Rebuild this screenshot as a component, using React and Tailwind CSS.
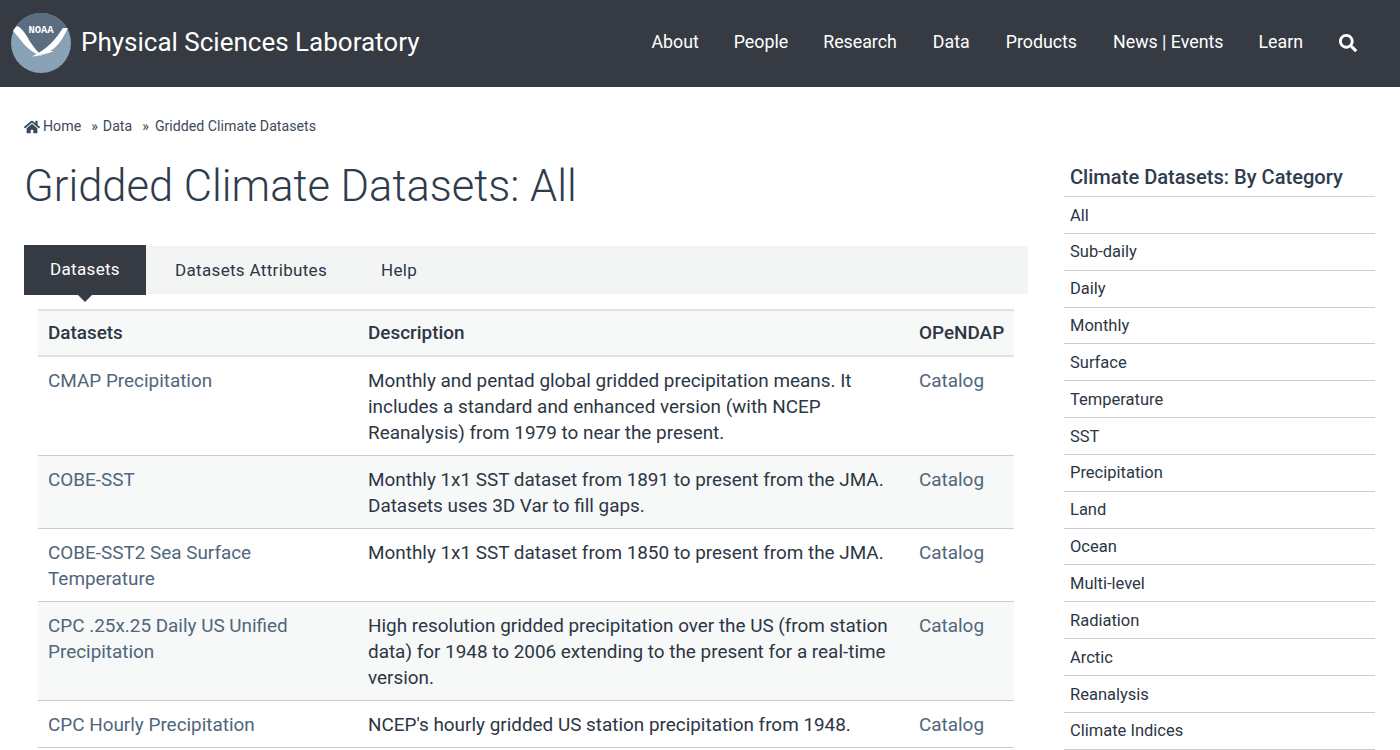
import { FaHome, FaSearch } from 'react-icons/fa'

const navItems = [
  { label: 'About', className: 'ml-0' },
  { label: 'People', className: 'ml-[35px]' },
  { label: 'Research', className: 'ml-[35px]' },
  { label: 'Data', className: 'ml-[36px]' },
  { label: 'Products', className: 'ml-[36px]' },
  { label: 'News | Events', className: 'ml-[36px]' },
  { label: 'Learn', className: 'ml-[35px]' },
]

const categories = [
  'All', 'Sub-daily', 'Daily', 'Monthly', 'Surface', 'Temperature', 'SST', 'Precipitation',
  'Land', 'Ocean', 'Multi-level', 'Radiation', 'Arctic', 'Reanalysis', 'Climate Indices',
]

const datasets = [
  {
    name: 'CMAP Precipitation',
    desc: 'Monthly and pentad global gridded precipitation means. It includes a standard and enhanced version (with NCEP Reanalysis) from 1979 to near the present.',
    rowClass: 'h-[99px] bg-white',
  },
  {
    name: 'COBE-SST',
    desc: 'Monthly 1x1 SST dataset from 1891 to present from the JMA. Datasets uses 3D Var to fill gaps.',
    rowClass: 'h-[73px] bg-[#f7f8f8]',
  },
  {
    name: 'COBE-SST2 Sea Surface Temperature',
    desc: 'Monthly 1x1 SST dataset from 1850 to present from the JMA.',
    rowClass: 'h-[73px] bg-white',
  },
  {
    name: 'CPC .25x.25 Daily US Unified Precipitation',
    desc: 'High resolution gridded precipitation over the US (from station data) for 1948 to 2006 extending to the present for a real-time version.',
    rowClass: 'h-[99px] bg-[#f7f8f8]',
  },
  {
    name: 'CPC Hourly Precipitation',
    desc: "NCEP's hourly gridded US station precipitation from 1948.",
    rowClass: 'h-[47px] bg-white',
  },
]

function NoaaLogo() {
  return (
    <svg width="60" height="60" viewBox="0 0 60 60" className="shrink-0">
      <circle cx="30" cy="30" r="30" fill="#8aa2b6" />
      <path d="M4 15 A30 30 0 0 1 56 15 L30 42 Z" fill="#5a6e80" />
      <path d="M6 13 C12 15 16 24 20 30 C23 35 27 39 31 43 C24 41 17 36 12 30 C8 25 5 21 2 18 C3 16 4.5 14 6 13 Z" fill="#ffffff" />
      <path d="M52 15 L57 15 C53 23 48 33 39 38 L43 38 C38 40 28 43 21 43.5 L29 39 C39 33 46 24 52 15 Z" fill="#ffffff" />
      <text x="30" y="20" textAnchor="middle" fill="#ffffff" fontSize="10.5" fontWeight="700" fontFamily="'Liberation Mono', monospace">NOAA</text>
    </svg>
  )
}

export default function App() {
  return (
    <div className="h-[750px] overflow-hidden bg-white text-[#2c3644] font-['Roboto',sans-serif]">
      <header className="h-[87px] bg-[#363a43] border-b-2 border-[#2f3c4d] flex items-center pl-[11px] pr-[43px] text-white">
        <NoaaLogo />
        <span className="ml-[10px] pb-[2px] text-[26px] leading-none">Physical Sciences Laboratory</span>
        <nav className="ml-auto flex items-center text-[17.8px]">
          {navItems.map((item) => (
            <a key={item.label} className={item.className}>{item.label}</a>
          ))}
          <FaSearch className="ml-[36px] text-[18px]" />
        </nav>
      </header>

      <div className="flex pl-[24px]">
        <main className="w-[1004px] shrink-0">
          <div className="mt-[31px] flex items-center h-[18px] text-[14.2px] text-[#3d4a5a]">
            <FaHome className="text-[16px] mr-[3px] text-[#36475a]" />
            <span>Home</span>
            <span className="ml-[10px] mr-[5px]">»</span>
            <span>Data</span>
            <span className="ml-[10px] mr-[6px]">»</span>
            <span>Gridded Climate Datasets</span>
          </div>

          <h1 className="mt-[25px] text-[43.5px] leading-[52px] font-light text-[#2f3c4d]">
            Gridded Climate Datasets: All
          </h1>

          <div className="mt-[33px] h-[48px] bg-[#f3f5f5] flex items-center text-[17px] tracking-[0.33px]">
            <div className="relative w-[122px] h-[50px] bg-[#363a43] text-white flex items-center justify-center">
              Datasets
              <div className="absolute left-[54px] top-[50px] w-0 h-0 border-x-[7px] border-x-transparent border-t-[7px] border-t-[#363a43]" />
            </div>
            <span className="ml-[29px] pt-[2px]">Datasets Attributes</span>
            <span className="ml-[54px] pt-[2px]">Help</span>
          </div>

          <table className="mt-[15px] ml-[14px] w-[976px] table-fixed border-collapse text-[18.9px] leading-[26px]">
            <thead>
              <tr className="h-[46px] bg-[#f7f8f8] border-y-2 border-[#dee2e4] text-left">
                <th className="w-[320px] px-[10px] font-medium">Datasets</th>
                <th className="w-[551px] px-[10px] font-medium">Description</th>
                <th className="px-[10px] font-medium">OPeNDAP</th>
              </tr>
            </thead>
            <tbody>
              {datasets.map((d) => (
                <tr key={d.name} className={`${d.rowClass} border-b border-[#c9cdd0] align-top`}>
                  <td className="px-[10px] pt-[11px] text-[#50667c]">{d.name}</td>
                  <td className="px-[10px] pt-[11px]">{d.desc}</td>
                  <td className="px-[10px] pt-[11px] text-[#50667c]">Catalog</td>
                </tr>
              ))}
            </tbody>
          </table>
        </main>

        <aside className="ml-[36px] w-[311px] shrink-0 pt-[76px]">
          <h2 className="pl-[6px] h-[34px] text-[20.1px] leading-[28px] font-medium text-[#2f3c4d] border-b border-[#cfd2d4]">
            Climate Datasets: By Category
          </h2>
          <ul className="text-[16.5px]">
            {categories.map((c) => (
              <li key={c} className="h-[36.85px] flex items-center pl-[6px] pt-[2px] border-b border-[#c9cdd0]">{c}</li>
            ))}
          </ul>
        </aside>
      </div>
    </div>
  )
}
